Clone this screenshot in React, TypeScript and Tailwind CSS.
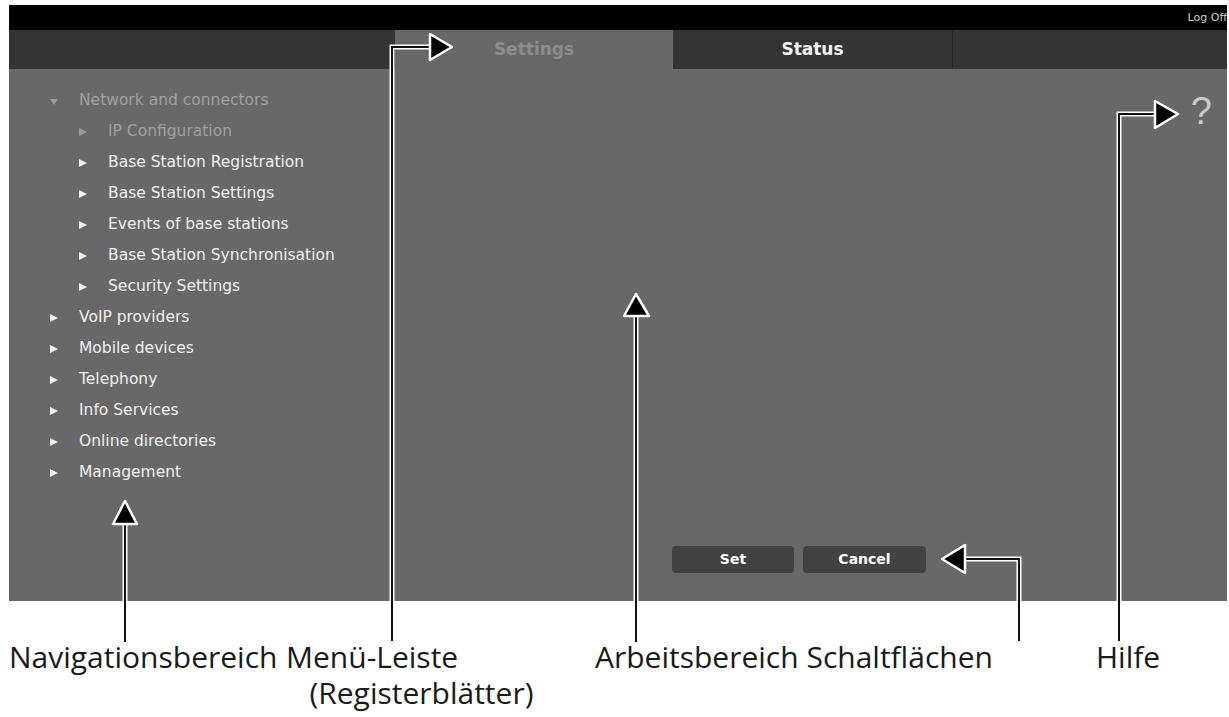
const ui = { fontFamily: '"DejaVu Sans", Verdana, sans-serif' };

const subItems = [
  { label: 'IP Configuration', dim: true },
  { label: 'Base Station Registration' },
  { label: 'Base Station Settings' },
  { label: 'Events of base stations' },
  { label: 'Base Station Synchronisation' },
  { label: 'Security Settings' },
];

const topItems = [
  'VoIP providers',
  'Mobile devices',
  'Telephony',
  'Info Services',
  'Online directories',
  'Management',
];

function Tri({ dim, down }: { dim?: boolean; down?: boolean }) {
  return (
    <svg width="10" height="10" viewBox="0 0 10 10" className="shrink-0">
      {down ? (
        <polygon points="1,3 9,3 5,9" fill={dim ? '#9a9a9a' : '#f2f2f2'} />
      ) : (
        <polygon points="1,1 9,5 1,9" fill={dim ? '#9a9a9a' : '#f2f2f2'} />
      )}
    </svg>
  );
}

function NavRow({ label, level, dim, open }: { label: string; level: 0 | 1; dim?: boolean; open?: boolean }) {
  return (
    <li className={`flex items-center h-[31px] ${level === 0 ? 'pl-[40px]' : 'pl-[69px]'}`}>
      <Tri dim={dim} down={open} />
      <span
        className={`ml-[20px] text-[15.5px] leading-none whitespace-nowrap ${dim ? 'text-[#a0a0a0]' : 'text-[#f0f0f0]'}`}
      >
        {label}
      </span>
    </li>
  );
}

function Callouts() {
  // annotation lines: white halo with black core, arrowheads black with white rim
  const lines = [
    'M125 642 V524',
    'M392 641 V47 H430',
    'M636 642 V316',
    'M1019 641 V559 H965',
    'M1119 641 V114 H1155',
  ];
  const heads = [
    '113,524 137,524 125,501',
    '430,34 430,60 452,47',
    '624,316 649,316 636,294',
    '965,545 965,573 942,559',
    '1155,101 1155,128 1178,114',
  ];
  return (
    <svg className="absolute inset-0 pointer-events-none" width="1229" height="717" viewBox="0 0 1229 717">
      {lines.map((d) => (
        <path key={d + 'w'} d={d} fill="none" stroke="#ffffff" strokeWidth="5" />
      ))}
      {lines.map((d) => (
        <path key={d} d={d} fill="none" stroke="#111111" strokeWidth="2" />
      ))}
      {heads.map((p) => (
        <polygon key={p} points={p} fill="#000000" stroke="#ffffff" strokeWidth="2.5" strokeLinejoin="round" />
      ))}
    </svg>
  );
}

export default function App() {
  return (
    <div className="relative w-[1229px] h-[717px] bg-white overflow-hidden">
      {/* Screenshot of the web configurator */}
      <div className="ml-[9px] mt-[5px] w-[1218px] flex flex-col" style={ui}>
        {/* top bar */}
        <div className="h-[25px] bg-black flex items-center justify-end">
          <span className="text-[11px] text-[#cfcfcf] leading-none">Log Off</span>
        </div>

        {/* tabs */}
        <div className="h-[39px] flex bg-[#343434]">
          <div className="w-[386px]" />
          <div className="w-[278px] bg-[#686868] flex items-center justify-center">
            <span className="text-[17px] font-bold text-[#8c8c8c]">Settings</span>
          </div>
          <div className="w-[279px] flex items-center justify-center">
            <span className="text-[17px] font-bold text-[#f4f4f4]">Status</span>
          </div>
          <div className="flex-1 border-l border-[#262626]" />
        </div>

        {/* main */}
        <div className="h-[532px] bg-[#686868] flex">
          <nav className="w-[386px] pt-[16px]">
            <ul>
              <NavRow label="Network and connectors" level={0} dim open />
              {subItems.map((s) => (
                <NavRow key={s.label} label={s.label} level={1} dim={s.dim} />
              ))}
              {topItems.map((t) => (
                <NavRow key={t} label={t} level={0} />
              ))}
            </ul>
          </nav>

          <div className="flex-1 flex flex-col">
            <div className="flex justify-end pt-[23px] pr-[15px]">
              <span
                className="text-[38px] leading-[38px] text-[#cacaca]"
                style={{ fontFamily: '"Liberation Sans", Arial, sans-serif' }}
              >
                ?
              </span>
            </div>
            <div className="flex-1" />
            <div className="flex gap-[9px] ml-[277px] mb-[28px]">
              <button className="w-[122px] h-[27px] rounded-[4px] bg-[#424242] text-white text-[14px] font-bold">
                Set
              </button>
              <button className="w-[123px] h-[27px] rounded-[4px] bg-[#424242] text-white text-[14px] font-bold">
                Cancel
              </button>
            </div>
          </div>
        </div>
      </div>

      {/* Legend labels */}
      <div
        className="flex mt-[38px] text-[30px] leading-[36px] text-[#1a1a1a]"
        style={{ fontFamily: '"Open Sans", sans-serif' }}
      >
        <div className="w-[286px] pl-[9px] whitespace-nowrap">Navigationsbereich</div>
        <div className="w-[309px] whitespace-pre">{'Menü-Leiste\n   (Registerblätter)'}</div>
        <div className="w-[501px] whitespace-nowrap">Arbeitsbereich Schaltflächen</div>
        <div className="whitespace-nowrap">Hilfe</div>
      </div>

      <Callouts />
    </div>
  );
}
